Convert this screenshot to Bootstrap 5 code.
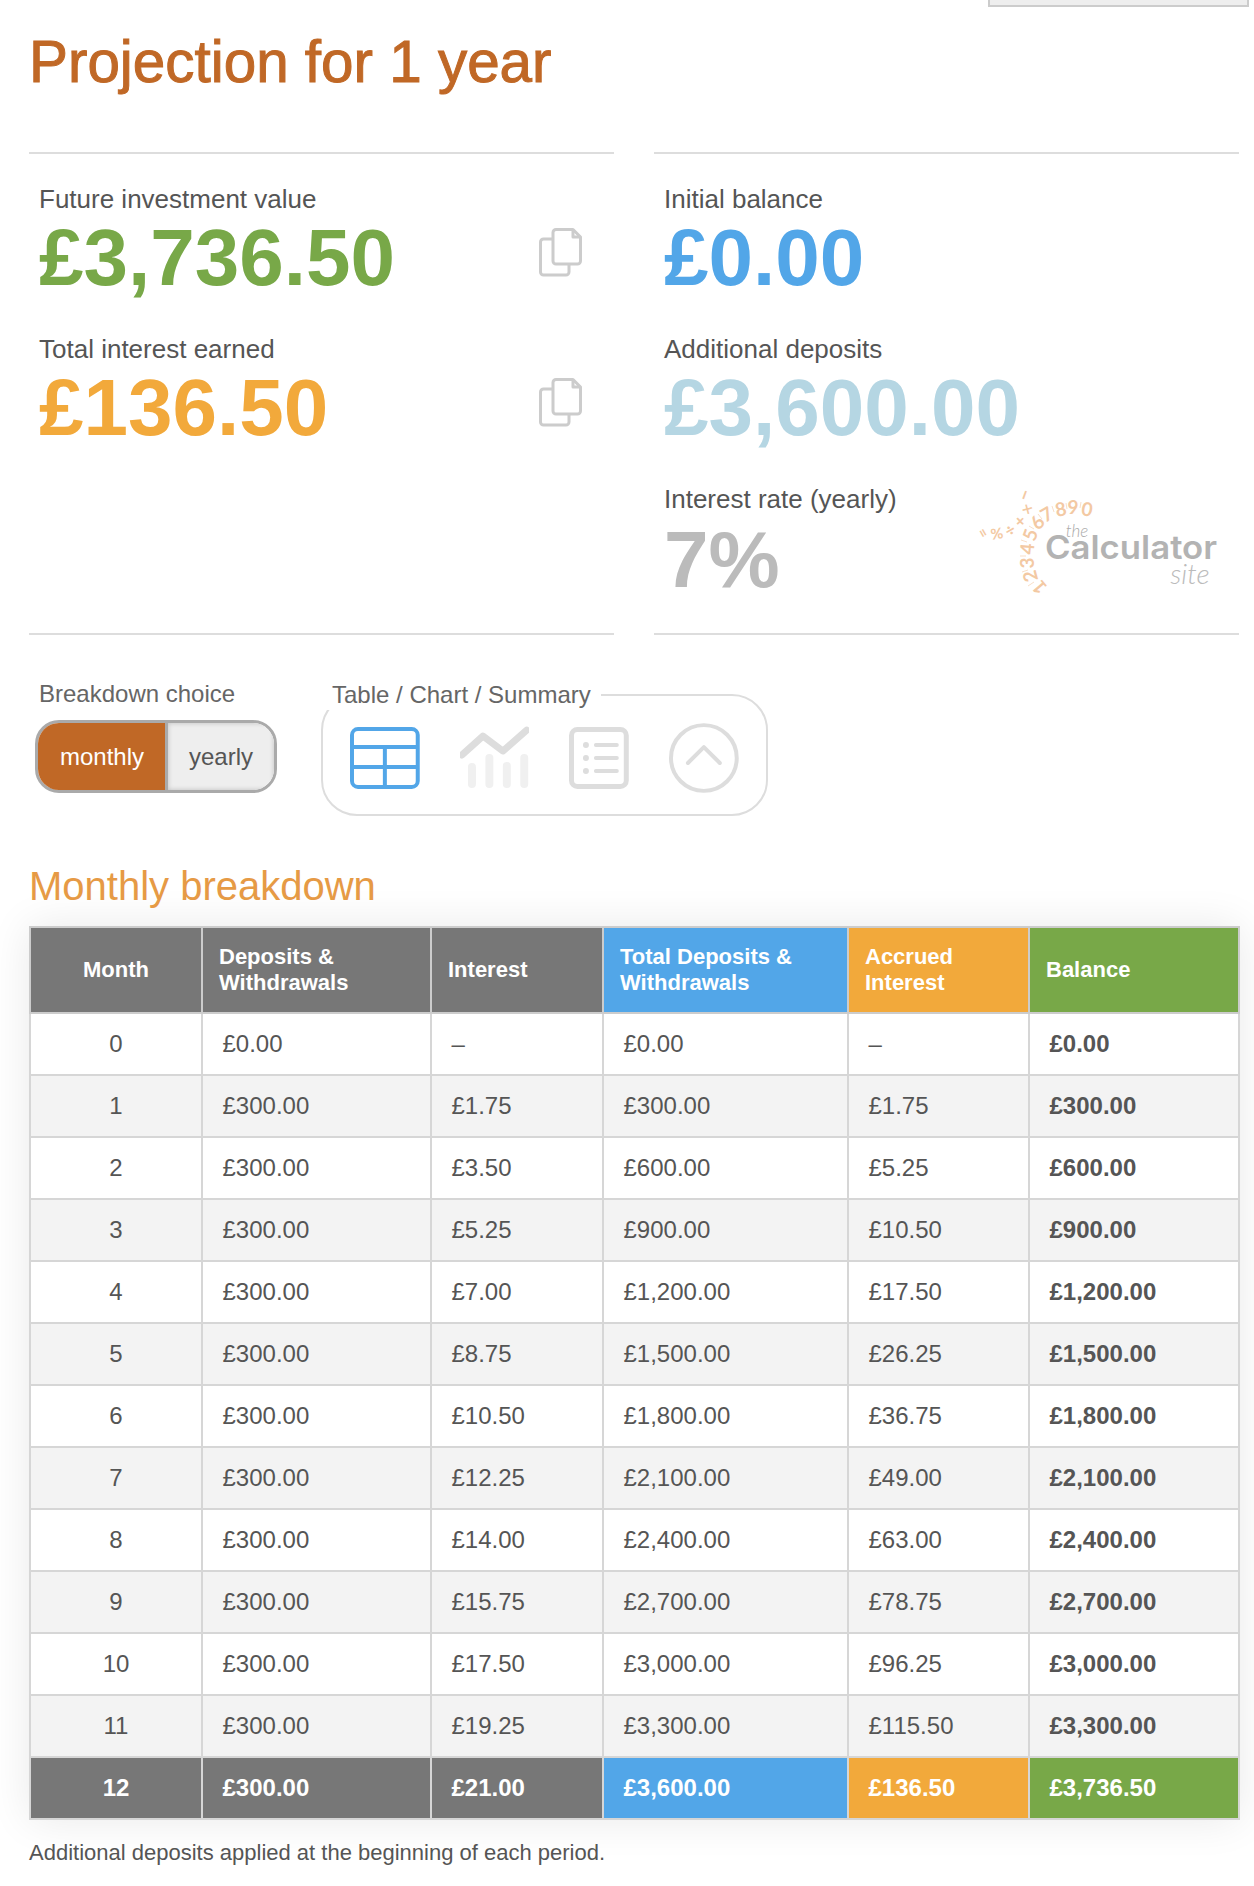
<!DOCTYPE html>
<html lang="en">
<head>
<meta charset="utf-8">
<title>Projection for 1 year</title>
<link href="https://cdn.jsdelivr.net/npm/bootstrap@5.3.0/dist/css/bootstrap.min.css" rel="stylesheet">
<style>
body{margin:0;background:#fff;font-family:"Liberation Sans",Arial,sans-serif;color:#555;}
.tabstub{height:7px;padding-right:5px;}
.tabstub div{width:261px;height:7px;background:#eee;border:2px solid #ccc;border-top:0;}
.pagebox{padding:0 15px 0 29px;}
.maintitle{font-size:58.4px;line-height:70px;font-weight:400;color:#c06826;margin:20px 0 55px;-webkit-text-stroke:1px #c06826;}
.statrow{--bs-gutter-x:40px;}
.statcol{border-top:2px solid #ddd;border-bottom:2px solid #ddd;height:483px;padding:0;}
.statbox{padding:28px 10px 0;height:150px;}
.statlabel{font-size:26px;line-height:34px;color:#555;}
.statvalue{font-size:80px;line-height:78px;font-weight:700;margin-top:3px;}
.valuelow{margin-top:5px;}
.copyicon{width:44px;height:50px;margin:46px 21px 0 0;}
.vgreen{color:#78a848}.vorange{color:#f2a93b}.vblue{color:#52a6e8}.vlight{color:#b5d6e3}.vgrey{color:#bbb}
.logomark{width:270px;height:140px;margin:-9px -1px 0 0;}
.choicerow{padding:0 0 0 6px;margin-top:44px;gap:43px;}
.choicelabel{font-size:24px;line-height:30px;color:#666;padding-left:4px;}
.switchbox{margin-top:11px;border:3px solid #aaa;border-radius:24px;width:242px;height:73px;overflow:hidden;}
.switchbox .btn{font-size:24px;border:0;border-radius:0;padding:0;display:flex;align-items:center;justify-content:center;}
.switchbox .switchon{flex:0 0 128px;background:#c06826;color:#fff;}
.switchbox .switchoff{flex:1 1 0;background:#eee;color:#555;border-left:3px solid #aaa;box-shadow:inset 0 0 5px rgba(0,0,0,.2);}
.viewset{width:447px;height:136px;border:2px solid #ddd;border-radius:36px;padding:0 27px;margin:1px 0 0 1px;min-width:0;}
.viewset legend{float:none;width:auto;font-size:24px;line-height:30px;color:#666;margin:0 0 0 -28px;padding:0 10px 0 10px;}
.viewicons{gap:40px;padding-top:13px;}
.subtitle{font-size:40px;line-height:48px;color:#e69a45;font-weight:400;margin:46px 0 16px;}
.datatable{table-layout:fixed;width:1209px;margin:0;border-collapse:collapse;box-shadow:0 0 40px rgba(0,0,0,.09);--bs-table-border-color:#d6d6d6;--bs-table-color:#555;}
.datatable>:not(caption)>*>*{padding:0 19.5px;border:2px solid #d6d6d6;height:62px;vertical-align:middle;font-size:24px;color:#555;box-shadow:none;background:transparent;}
.datatable thead th{height:86px;padding:0 16px;font-size:22px;line-height:26px;font-weight:700;color:#fff;background:#777;border-color:#ccc;}
.datatable tbody tr:nth-child(even) td{background:#f3f3f3;}
.datatable tbody td:last-child{font-weight:700;}
.datatable .firstcell{text-align:center;}
.datatable tr.totalrow td,.datatable tr.totalrow td:last-child{background:#777;color:#fff;font-weight:700;}
.datatable thead .cblue,.datatable tr.totalrow td.cblue{background:#52a6e8;}
.datatable thead .corange,.datatable tr.totalrow td.corange{background:#f2a93b;}
.datatable thead .cgreen,.datatable tr.totalrow td.cgreen{background:#78a848;}
.footnote{font-size:22px;line-height:28px;margin:19px 0 0;color:#555;}
</style>
</head>
<body>
<div class="tabstub d-flex justify-content-end"><div></div></div>
<div class="pagebox">
  <h1 class="maintitle">Projection for 1 year</h1>
  <div class="row statrow">
    <div class="col-6">
      <div class="statcol">
        <div class="statbox d-flex justify-content-between align-items-start">
          <div><div class="statlabel">Future investment value</div><div class="statvalue vgreen">£3,736.50</div></div>
          <svg class="copyicon" viewBox="0 0 44 50" fill="none" stroke="#ccc" stroke-width="3" stroke-linejoin="round"><path d="M17 1.5H34L41.5 9V33a3 3 0 0 1-3 3H17a3 3 0 0 1-3-3V4.5a3 3 0 0 1 3-3z"/><path d="M34 1.5V9H41.5"/><path d="M14 11H4.5a3 3 0 0 0-3 3V44a3 3 0 0 0 3 3H27a3 3 0 0 0 3-3V36"/></svg>
        </div>
        <div class="statbox d-flex justify-content-between align-items-start">
          <div><div class="statlabel">Total interest earned</div><div class="statvalue vorange">£136.50</div></div>
          <svg class="copyicon" viewBox="0 0 44 50" fill="none" stroke="#ccc" stroke-width="3" stroke-linejoin="round"><path d="M17 1.5H34L41.5 9V33a3 3 0 0 1-3 3H17a3 3 0 0 1-3-3V4.5a3 3 0 0 1 3-3z"/><path d="M34 1.5V9H41.5"/><path d="M14 11H4.5a3 3 0 0 0-3 3V44a3 3 0 0 0 3 3H27a3 3 0 0 0 3-3V36"/></svg>
        </div>
      </div>
    </div>
    <div class="col-6">
      <div class="statcol">
        <div class="statbox"><div class="statlabel">Initial balance</div><div class="statvalue vblue">£0.00</div></div>
        <div class="statbox"><div class="statlabel">Additional deposits</div><div class="statvalue vlight">£3,600.00</div></div>
        <div class="statbox d-flex justify-content-between">
          <div><div class="statlabel">Interest rate (yearly)</div><div class="statvalue valuelow vgrey">7%</div></div>
          <svg class="logomark" viewBox="0 0 270 140" font-family="Lato,sans-serif" font-weight="700" font-size="19" fill="#f3c9a3" text-anchor="middle">
            <text transform="translate(80 114) rotate(-130)" dy="6">1</text>
            <text transform="translate(71 103) rotate(-105)" dy="6">2</text>
            <text transform="translate(68 90) rotate(-90)" dy="6">3</text>
            <text transform="translate(68 76) rotate(-85)" dy="6">4</text>
            <text transform="translate(71 62) rotate(-70)" dy="6">5</text>
            <text transform="translate(78 50) rotate(-50)" dy="6">6</text>
            <text transform="translate(87 42) rotate(-30)" dy="6">7</text>
            <text transform="translate(101 37) rotate(-12)" dy="6">8</text>
            <text transform="translate(113 35) rotate(0)" dy="6">9</text>
            <text transform="translate(127 37) rotate(10)" dy="6">0</text>
            <text transform="translate(65 22) rotate(-70)" dy="6">−</text>
            <text transform="translate(67 36) rotate(-60)" dy="6" font-size="17">×</text>
            <text transform="translate(60 48) rotate(-45)" dy="6" font-size="17">+</text>
            <text transform="translate(50 57) rotate(-30)" dy="6" font-size="17">÷</text>
            <text transform="translate(37 61) rotate(-10)" dy="5" font-size="15">%</text>
            <text transform="translate(23 60) rotate(60)" dy="5" font-size="15">=</text>
            <g stroke="#f3c9a3" stroke-width=".6"><path d="M74 109l-6 4M68 97l-6 2M66 83l-6 0M67 69l-6-2M74 56l-5-3M82 46l-4-5M94 39l-2-6M107 36l-1-6M120 35l1-6"/></g>
            <text x="117" y="64" font-size="17" font-style="italic" font-weight="300" fill="#aaa">the</text>
            <text x="85" y="86" font-family="Inter,sans-serif" font-size="33" font-weight="600" fill="#b3b3b3" text-anchor="start" textLength="172" lengthAdjust="spacingAndGlyphs">Calculator</text>
            <text x="230" y="111" font-size="28" font-style="italic" font-weight="300" fill="#bbb">site</text>
          </svg>
        </div>
      </div>
    </div>
  </div>

  <div class="d-flex choicerow">
    <div>
      <div class="choicelabel">Breakdown choice</div>
      <div class="btn-group d-flex switchbox">
        <button type="button" class="btn switchon">monthly</button>
        <button type="button" class="btn switchoff">yearly</button>
      </div>
    </div>
    <fieldset class="viewset">
      <legend>Table / Chart / Summary</legend>
      <div class="d-flex viewicons">
        <svg width="70" height="70" viewBox="0 0 70 70" fill="none" stroke="#52a6e8" stroke-width="4"><rect x="2" y="6" width="66" height="58" rx="6"/><path d="M2 24H68M2 44H68M35 24V64"/></svg>
        <svg width="70" height="70" viewBox="0 0 70 70" fill="none" stroke-linecap="round" stroke-linejoin="round"><path d="M12 44V61M29.500 35V61M47 43V61M64.500 35V61" stroke="#f0f0f0" stroke-width="8"/><path d="M2 32L23 13L43 28L67 7" stroke="#ddd" stroke-width="7"/></svg>
        <svg width="60" height="70" viewBox="0 0 60 70" fill="none" stroke="#ddd"><rect x="2.500" y="6.500" width="55" height="57" rx="6" stroke-width="5"/><g stroke-width="4" stroke-linecap="round"><path d="M27 22H48M27 35H48M27 48H48"/></g><g fill="#ddd" stroke="none"><circle cx="17" cy="22" r="3"/><circle cx="17" cy="35" r="3"/><circle cx="17" cy="48" r="3"/></g></svg>
        <svg width="70" height="70" viewBox="0 0 70 70" fill="none" stroke="#ddd" stroke-width="4"><circle cx="35" cy="35" r="33"/><path d="M19 40L35 24L51 40" stroke-linecap="round" stroke-linejoin="round"/></svg>
      </div>
    </fieldset>
  </div>

  <h2 class="subtitle">Monthly breakdown</h2>
  <table class="table datatable">
    <colgroup><col style="width:172px"><col style="width:229px"><col style="width:172px"><col style="width:245px"><col style="width:181px"><col style="width:210px"></colgroup>
    <thead>
      <tr><th class="firstcell">Month</th><th>Deposits &amp; Withdrawals</th><th>Interest</th><th class="cblue">Total Deposits &amp; Withdrawals</th><th class="corange">Accrued Interest</th><th class="cgreen">Balance</th></tr>
    </thead>
    <tbody>
      <tr><td class="firstcell">0</td><td>£0.00</td><td>–</td><td>£0.00</td><td>–</td><td>£0.00</td></tr>
      <tr><td class="firstcell">1</td><td>£300.00</td><td>£1.75</td><td>£300.00</td><td>£1.75</td><td>£300.00</td></tr>
      <tr><td class="firstcell">2</td><td>£300.00</td><td>£3.50</td><td>£600.00</td><td>£5.25</td><td>£600.00</td></tr>
      <tr><td class="firstcell">3</td><td>£300.00</td><td>£5.25</td><td>£900.00</td><td>£10.50</td><td>£900.00</td></tr>
      <tr><td class="firstcell">4</td><td>£300.00</td><td>£7.00</td><td>£1,200.00</td><td>£17.50</td><td>£1,200.00</td></tr>
      <tr><td class="firstcell">5</td><td>£300.00</td><td>£8.75</td><td>£1,500.00</td><td>£26.25</td><td>£1,500.00</td></tr>
      <tr><td class="firstcell">6</td><td>£300.00</td><td>£10.50</td><td>£1,800.00</td><td>£36.75</td><td>£1,800.00</td></tr>
      <tr><td class="firstcell">7</td><td>£300.00</td><td>£12.25</td><td>£2,100.00</td><td>£49.00</td><td>£2,100.00</td></tr>
      <tr><td class="firstcell">8</td><td>£300.00</td><td>£14.00</td><td>£2,400.00</td><td>£63.00</td><td>£2,400.00</td></tr>
      <tr><td class="firstcell">9</td><td>£300.00</td><td>£15.75</td><td>£2,700.00</td><td>£78.75</td><td>£2,700.00</td></tr>
      <tr><td class="firstcell">10</td><td>£300.00</td><td>£17.50</td><td>£3,000.00</td><td>£96.25</td><td>£3,000.00</td></tr>
      <tr><td class="firstcell">11</td><td>£300.00</td><td>£19.25</td><td>£3,300.00</td><td>£115.50</td><td>£3,300.00</td></tr>
      <tr class="totalrow"><td class="firstcell">12</td><td>£300.00</td><td>£21.00</td><td class="cblue">£3,600.00</td><td class="corange">£136.50</td><td class="cgreen">£3,736.50</td></tr>
    </tbody>
  </table>
  <p class="footnote">Additional deposits applied at the beginning of each period.</p>
</div>
</body>
</html>
